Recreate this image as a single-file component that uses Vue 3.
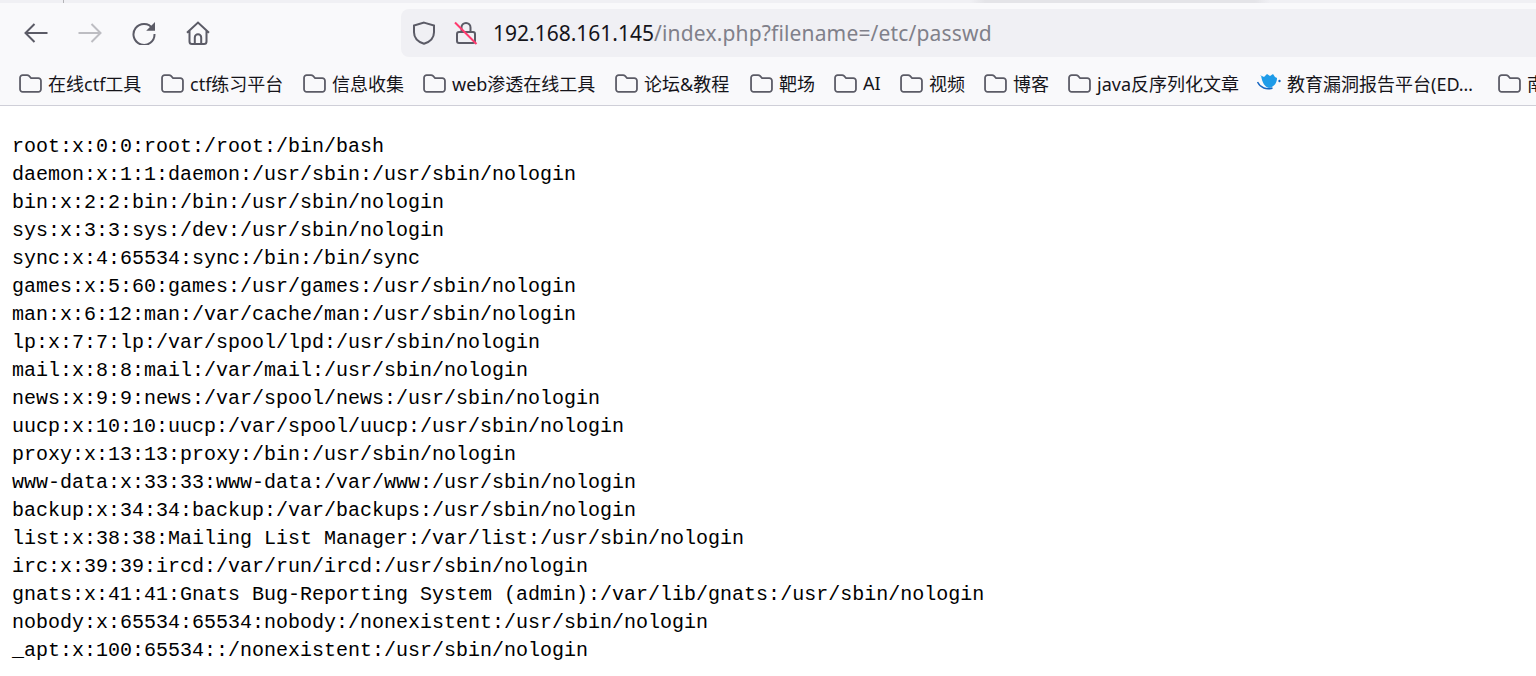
<script setup>
const bookmarks = [
  { label: '在线ctf工具' },
  { label: 'ctf练习平台' },
  { label: '信息收集' },
  { label: 'web渗透在线工具' },
  { label: '论坛&教程' },
  { label: '靶场' },
  { label: 'AI' },
  { label: '视频' },
  { label: '博客' },
  { label: 'java反序列化文章' },
  { label: '教育漏洞报告平台(ED…', fav: true },
  { label: '南' },
]
const passwd = `root:x:0:0:root:/root:/bin/bash
daemon:x:1:1:daemon:/usr/sbin:/usr/sbin/nologin
bin:x:2:2:bin:/bin:/usr/sbin/nologin
sys:x:3:3:sys:/dev:/usr/sbin/nologin
sync:x:4:65534:sync:/bin:/bin/sync
games:x:5:60:games:/usr/games:/usr/sbin/nologin
man:x:6:12:man:/var/cache/man:/usr/sbin/nologin
lp:x:7:7:lp:/var/spool/lpd:/usr/sbin/nologin
mail:x:8:8:mail:/var/mail:/usr/sbin/nologin
news:x:9:9:news:/var/spool/news:/usr/sbin/nologin
uucp:x:10:10:uucp:/var/spool/uucp:/usr/sbin/nologin
proxy:x:13:13:proxy:/bin:/usr/sbin/nologin
www-data:x:33:33:www-data:/var/www:/usr/sbin/nologin
backup:x:34:34:backup:/var/backups:/usr/sbin/nologin
list:x:38:38:Mailing List Manager:/var/list:/usr/sbin/nologin
irc:x:39:39:ircd:/var/run/ircd:/usr/sbin/nologin
gnats:x:41:41:Gnats Bug-Reporting System (admin):/var/lib/gnats:/usr/sbin/nologin
nobody:x:65534:65534:nobody:/nonexistent:/usr/sbin/nologin
_apt:x:100:65534::/nonexistent:/usr/sbin/nologin`
</script>

<template>
  <div class="page">
    <div class="tabstrip"><span class="tick"></span><span class="tabshadow"></span></div>
    <div class="toolbar">
      <div class="navs">
        <svg class="nav" viewBox="0 0 24 24"><path d="M23.500 12H1.500M10.500 3l-9 9 9 9" /></svg>
        <svg class="nav off" viewBox="0 0 24 24"><path d="M.5 12H22.500M13.500 3l9 9-9 9" /></svg>
        <svg class="nav" viewBox="0 0 24 24"><path d="M20.700 7.500A10.500 10.500 0 1 0 22.500 13" /><path class="solid" d="M23 1v8.800h-8.800z" /></svg>
        <svg class="nav" viewBox="0 0 24 24"><path d="M1 11.800 12 1.500l11 10.300M3.500 9.500V20.500a2.500 2.500 0 0 0 2.500 2.500h12a2.500 2.500 0 0 0 2.500-2.500V9.500" /><path d="M8.800 23v-6.500a3.200 3.200 0 0 1 6.400 0V23" /></svg>
      </div>
      <div class="urlbar">
        <svg class="shield" viewBox="0 0 24 24"><path d="M12 1.600 22 4.600v6.600c0 5.600-4 9.600-10 11.600C6 20.800 2 16.800 2 11.200V4.600z" /></svg>
        <svg class="lock" viewBox="0 0 24 24">
          <path class="body" d="M7.500 11V6.500a4.500 4.500 0 0 1 9 0V11M3 13a2 2 0 0 1 2-2h14a2 2 0 0 1 2 2v7a2 2 0 0 1-2 2H5a2 2 0 0 1-2-2z" />
          <path class="slash" d="M1 1.500 22.500 23" />
        </svg>
        <div class="url"><span class="host">192.168.161.145</span><span class="path">/index.php?filename=/etc/passwd</span></div>
      </div>
    </div>
    <div class="bookmarks">
      <div v-for="b in bookmarks" :key="b.label" class="bookmark">
        <svg v-if="b.fav" class="fav" viewBox="0 0 24 18">
          <path fill="#1e9be8" d="M3 2l4 2 3-3 3 2 3-2 2 3 2 1c0 5-3 9-8 10-4-1-7-5-8-13z" />
          <path fill="none" stroke="#1565c0" stroke-width="1.400" d="M0.500 9c3 6 9 8 15 6" />
          <circle cx="22.500" cy="8" r="1.200" fill="#1565c0" />
        </svg>
        <svg v-else class="folder" viewBox="0 0 22 18"><path d="M1 3.500A2.500 2.500 0 0 1 3.500 1h4.300c.7 0 1.300.3 1.800.8L11.500 3.800h7A2.500 2.500 0 0 1 21 6.300v8.200a2.500 2.500 0 0 1-2.500 2.500h-15A2.500 2.500 0 0 1 1 14.500z" /></svg>
        <span class="label">{{ b.label }}</span>
      </div>
    </div>
    <pre class="content">{{ passwd }}</pre>
  </div>
</template>

<style scoped>
.page {
  width: 1536px;
  height: 676px;
  overflow: hidden;
  background: #fff;
}
.tabstrip {
  height: 3px;
  background: #f0f0f4;
  position: relative;
}
.tick {
  display: block;
  width: 1px;
  height: 3px;
  margin-left: 63px;
  background: #b4b4b8;
}
.tabshadow {
  position: absolute;
  top: 0;
  left: 970px;
  width: 300px;
  height: 3px;
  background: linear-gradient(90deg, #f0f0f4, #e4e4e8 5%, #e4e4e8 95%, #f0f0f4);
}
.toolbar {
  height: 48px;
  padding-top: 6px;
  display: flex;
  background: #f9f9fb;
}
.navs {
  width: 401px;
  display: flex;
  align-items: center;
  padding-left: 24px;
  gap: 30px;
  box-sizing: border-box;
}
.nav {
  width: 24px;
  height: 24px;
  fill: none;
  stroke: #5b5b66;
  stroke-width: 2;
}
.nav.off {
  stroke: #bdbdc2;
}
.nav .solid {
  fill: #5b5b66;
  stroke: none;
}
.urlbar {
  flex: 1;
  display: flex;
  align-items: center;
  background: #f0f0f4;
  border-radius: 8px 0 0 8px;
  padding-left: 11px;
}
.shield {
  width: 24px;
  height: 24px;
  fill: none;
  stroke: #5b5b66;
  stroke-width: 2;
}
.lock {
  width: 24px;
  height: 24px;
  margin-left: 18px;
  fill: none;
}
.lock .body {
  stroke: #5b5b66;
  stroke-width: 2;
}
.lock .slash {
  stroke: #ff3a6e;
  stroke-width: 2;
}
.url {
  margin-left: 15px;
  font: 21px "Noto Sans", "Open Sans", sans-serif;
  white-space: nowrap;
}
.host {
  color: #15141a;
}
.path {
  color: #80808a;
  letter-spacing: 0.16px;
}
.bookmarks {
  height: 48px;
  display: grid;
  grid-template-columns: 142px 142px 120px 192px 135px 84px 66px 84px 84px 189px 241px 60px;
  align-items: center;
  padding: 0 0 0 19px;
  background: #f9f9fb;
  border-bottom: 1px solid #cfcfd8;
  overflow: hidden;
}
.bookmark {
  display: flex;
  align-items: center;
  gap: 6px;
  white-space: nowrap;
  font: 18px "Noto Sans", "Noto Sans CJK SC", sans-serif;
  color: #15141a;
}
.label {
  padding-top: 3px;
}
.folder {
  width: 23px;
  height: 19px;
  margin-top: 4px;
  fill: none;
  stroke: #5b5b66;
  stroke-width: 1.700;
  flex: none;
}
.fav {
  width: 24px;
  height: 18px;
  margin-top: 1px;
  flex: none;
}
.content {
  margin: 27px 0 0 12px;
  font: 20px/28px "Liberation Mono", monospace;
  color: #000;
}
</style>
